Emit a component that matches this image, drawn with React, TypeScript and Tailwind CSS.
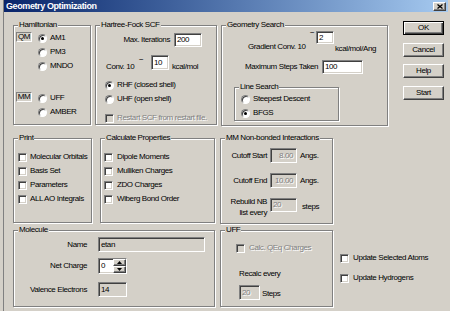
import clsx from 'clsx';
import type { ReactNode } from 'react';

const etched = 'border border-[#808080] shadow-[inset_1px_1px_0_#fff,1px_1px_0_#fff]';
const sunken =
  'border border-t-[#808080] border-l-[#808080] border-b-white border-r-white shadow-[inset_1px_1px_0_#404040,inset_-1px_-1px_0_#d4d0c8]';
const raised =
  'border border-t-white border-l-white border-b-[#404040] border-r-[#404040] shadow-[inset_-1px_-1px_0_#808080]';
const greyed = 'text-[#808080] [text-shadow:1px_1px_0_#fff]';

function GroupBox({ title, className, children }: { title: string; className?: string; children?: ReactNode }) {
  return (
    <div className={clsx('relative shrink-0', etched, className)}>
      <span className="absolute left-[4px] top-[-6px] bg-[#d4d0c8] px-[1px] leading-[10px]">{title}</span>
      {children}
    </div>
  );
}

function Radio({ on }: { on?: boolean }) {
  return (
    <span className="flex h-[9px] w-[9px] shrink-0 items-center justify-center rounded-full border border-t-[#808080] border-l-[#808080] border-b-white border-r-white bg-white shadow-[inset_1px_1px_0_#404040]">
      {on && <span className="h-[3px] w-[3px] rounded-full bg-black" />}
    </span>
  );
}

function Check({ off }: { off?: boolean }) {
  return <span className={clsx('block h-[9px] w-[9px] shrink-0', sunken, off ? 'bg-[#d4d0c8]' : 'bg-white')} />;
}

function Opt({ on, className, children }: { on?: boolean; className?: string; children: ReactNode }) {
  return (
    <div className={clsx('flex h-[14px] items-center gap-[3px]', className)}>
      <Radio on={on} />
      <span>{children}</span>
    </div>
  );
}

function CheckRow({ off, className, children }: { off?: boolean; className?: string; children: ReactNode }) {
  return (
    <div className={clsx('flex h-[14px] items-center', className)}>
      <Check off={off} />
      <span className={off ? greyed : undefined}>{children}</span>
    </div>
  );
}

function Field({
  tone = 'edit',
  className,
  children,
}: {
  tone?: 'edit' | 'ro' | 'off';
  className?: string;
  children?: ReactNode;
}) {
  return (
    <div
      className={clsx(
        'flex shrink-0 items-center px-[2px]',
        sunken,
        tone === 'edit' && 'bg-white',
        tone === 'ro' && 'bg-[#d4d0c8]',
        tone === 'off' && clsx('bg-[#d4d0c8]', greyed),
        className
      )}
    >
      {children}
    </div>
  );
}

function Tag({ children }: { children: ReactNode }) {
  return (
    <div className="mt-[1px] flex h-[10px] w-[16px] shrink-0 items-center justify-center border border-t-[#808080] border-l-[#808080] border-b-white border-r-white">
      {children}
    </div>
  );
}

function Btn({ def, children }: { def?: boolean; children: ReactNode }) {
  return (
    <button
      type="button"
      className={clsx(
        'flex h-[14px] w-[41px] items-center justify-center bg-[#d4d0c8]',
        def
          ? 'border border-black shadow-[inset_1px_1px_0_#fff,inset_-1px_-1px_0_#404040,inset_-2px_-2px_0_#808080]'
          : raised
      )}
    >
      {children}
    </button>
  );
}

function Spinner() {
  return (
    <div className="flex h-full w-[13px] flex-col">
      <div className={clsx('flex flex-1 items-center justify-center bg-[#d4d0c8]', raised)}>
        <svg width="5" height="3" viewBox="0 0 5 3">
          <path d="M2.5 0 L5 3 L0 3 Z" fill="#000" />
        </svg>
      </div>
      <div className={clsx('flex flex-1 items-center justify-center bg-[#d4d0c8]', raised)}>
        <svg width="5" height="3" viewBox="0 0 5 3">
          <path d="M0 0 L5 0 L2.5 3 Z" fill="#000" />
        </svg>
      </div>
    </div>
  );
}

export default function App() {
  return (
    <div className="h-[311px] w-[450px] overflow-hidden whitespace-nowrap bg-[#d4d0c8] pl-[3px] pr-[2px] font-['Liberation_Sans',Arial,sans-serif] text-[8px] leading-[10px] tracking-[-0.4px] text-black">
      <div className="h-full border-l border-l-[#808080]">
        {/* Title bar */}
        <div className="flex h-[12px] items-center justify-between bg-gradient-to-r from-[#0a246a] to-[#a6caf0] pl-[2px] pr-[2px]">
          <span className="text-[9px] font-bold text-white">Geometry Optimization</span>
          <div className={clsx('flex h-[9px] w-[13px] items-center justify-center bg-[#d4d0c8]', raised)}>
            <svg width="6" height="5" viewBox="0 0 6 5">
              <path d="M0.5 0.5 L5.5 4.5 M5.5 0.5 L0.5 4.5" stroke="#000" strokeWidth="1.3" />
            </svg>
          </div>
        </div>

        <div className="pl-[9px]">
          {/* Top row */}
          <div className="mt-[9px] flex items-start">
            <div className="mt-[4px] flex items-start gap-[4px]">
              <GroupBox title="Hamiltonian" className="h-[100px] w-[78px]">
                <div className="pl-[2px] pt-[5px]">
                  <div className="flex items-start">
                    <Tag>QM</Tag>
                    <div className="ml-[6px] flex flex-col">
                      <Opt on>AM1</Opt>
                      <Opt>PM3</Opt>
                      <Opt>MNDO</Opt>
                    </div>
                  </div>
                  <div className="mt-[18px] flex items-start">
                    <Tag>MM</Tag>
                    <div className="ml-[6px] flex flex-col">
                      <Opt>UFF</Opt>
                      <Opt>AMBER</Opt>
                    </div>
                  </div>
                </div>
              </GroupBox>

              <GroupBox title="Hartree-Fock SCF" className="h-[100px] w-[122px]">
                <div className="mt-[7px] flex h-[14px] items-center">
                  <span className="w-[74px] text-right">Max. Iterations</span>
                  <Field className="ml-[4px] h-[14px] w-[28px]">200</Field>
                </div>
                <div className="mt-[8px] flex h-[15px] items-start">
                  <span className="ml-[10px] mt-[7px] w-[33px]">Conv. 10</span>
                  <span className="w-[12px]">−</span>
                  <Field className="h-[15px] w-[18px]">10</Field>
                  <span className="ml-[3px] mt-[7px]">kcal/mol</span>
                </div>
                <div className="ml-[9px] mt-[8px] flex flex-col">
                  <Opt on className="h-[13px]">RHF (closed shell)</Opt>
                  <Opt className="h-[13px]">UHF (open shell)</Opt>
                  <CheckRow off className="mt-[5px] h-[12px] gap-[3px]">
                    Restart SCF from restart file.
                  </CheckRow>
                </div>
              </GroupBox>

              <GroupBox title="Geometry Search" className="h-[101px] w-[167px]">
                <div className="mt-[2px] flex items-start">
                  <span className="ml-[26px] mt-[14px] w-[62px]">Gradient Conv. 10</span>
                  <span className="w-[6px]">−</span>
                  <Field className="mt-[3px] h-[13px] w-[18px]">2</Field>
                  <span className="ml-[1px] mt-[16px]">kcal/mol/Ang</span>
                </div>
                <div className="mt-[6px] flex h-[14px] items-center">
                  <span className="ml-[23px] w-[77px]">Maximum Steps Taken</span>
                  <Field className="h-[14px] w-[41px]">100</Field>
                </div>
                <GroupBox title="Line Search" className="ml-[12px] mt-[13px] h-[34px] w-[105px]">
                  <div className="pl-[6px] pt-[4px]">
                    <Opt>Steepest Descent</Opt>
                    <Opt on>BFGS</Opt>
                  </div>
                </GroupBox>
              </GroupBox>
            </div>

            <div className="ml-[15px] flex flex-col gap-[7.5px]">
              <Btn def>OK</Btn>
              <Btn>Cancel</Btn>
              <Btn>Help</Btn>
              <Btn>Start</Btn>
            </div>
          </div>

          {/* Middle row */}
          <div className="mt-[12px] flex items-start">
            <GroupBox title="Print" className="h-[85px] w-[79px]">
              <div className="flex flex-col pl-[4px] pt-[11px]">
                {['Molecular Orbitals', 'Basis Set', 'Parameters', 'ALL AO Integrals'].map((t) => (
                  <CheckRow key={t} className="gap-[3px]">
                    {t}
                  </CheckRow>
                ))}
              </div>
            </GroupBox>

            <GroupBox title="Calculate Properties" className="ml-[8px] h-[85px] w-[115px]">
              <div className="flex flex-col pl-[3px] pt-[11px]">
                {['Dipole Moments', 'Mulliken Charges', 'ZDO Charges', 'Wiberg Bond Order'].map((t) => (
                  <CheckRow key={t} className="gap-[4px]">
                    {t}
                  </CheckRow>
                ))}
              </div>
            </GroupBox>

            <GroupBox title="MM Non-bonded Interactions" className="ml-[5px] h-[86px] w-[113px]">
              <div className="pt-[9px]">
                <div className="flex h-[15px] items-center">
                  <span className="w-[46px] text-right">Cutoff Start</span>
                  <Field tone="off" className="ml-[3px] h-[15px] w-[27px] justify-end pr-[3px]">
                    8.00
                  </Field>
                  <span className="ml-[3px]">Angs.</span>
                </div>
                <div className="mt-[10px] flex h-[15px] items-center">
                  <span className="w-[46px] text-right">Cutoff End</span>
                  <Field tone="off" className="ml-[3px] h-[15px] w-[27px] justify-end pr-[3px]">
                    10.00
                  </Field>
                  <span className="ml-[3px]">Angs.</span>
                </div>
                <div className="mt-[10px] flex h-[14px] items-start">
                  <span className="-mt-[2px] w-[46px] text-right leading-[11px]">
                    Rebuild NB
                    <br />
                    list every
                  </span>
                  <Field tone="off" className="ml-[3px] h-[14px] w-[27px]">
                    20
                  </Field>
                  <span className="ml-[5px] mt-[4px]">steps</span>
                </div>
              </div>
            </GroupBox>
          </div>

          {/* Bottom row */}
          <div className="mt-[6px] flex items-start">
            <GroupBox title="Molecule" className="h-[77px] w-[202px]">
              <div className="pt-[6px]">
                <div className="flex h-[15px] items-center">
                  <span className="w-[73px] text-right">Name</span>
                  <Field tone="ro" className="ml-[11px] h-[15px] w-[107px]">
                    etan
                  </Field>
                </div>
                <div className="mt-[6px] flex h-[16px] items-center">
                  <span className="w-[73px] text-right">Net Charge</span>
                  <div className={clsx('ml-[11px] flex h-[16px] w-[29px] bg-white', sunken)}>
                    <span className="flex flex-1 items-center pl-[2px]">0</span>
                    <Spinner />
                  </div>
                </div>
                <div className="mt-[8px] flex h-[15px] items-center">
                  <span className="w-[73px] text-right">Valence Electrons</span>
                  <Field tone="ro" className="ml-[11px] h-[15px] w-[29px]">
                    14
                  </Field>
                </div>
              </div>
            </GroupBox>

            <GroupBox title="UFF" className="ml-[5px] h-[77px] w-[113px]">
              <CheckRow off className="ml-[15px] mt-[10px] h-[12px] gap-[4px]">
                Calc. QEq Charges
              </CheckRow>
              <div className="ml-[18px] mt-[14px] h-[10px]">Recalc every</div>
              <div className="ml-[18px] mt-[6px] flex h-[15px] items-center">
                <Field tone="off" className="h-[15px] w-[21px]">
                  20
                </Field>
                <span className="ml-[2px] mt-[2px]">Steps</span>
              </div>
            </GroupBox>

            <div className="ml-[7px] mt-[21px] flex flex-col">
              <CheckRow className="h-[12px] gap-[4px]">Update Selected Atoms</CheckRow>
              <CheckRow className="mt-[6px] h-[12px] gap-[4px]">Update Hydrogens</CheckRow>
            </div>
          </div>
        </div>
      </div>
    </div>
  );
}
